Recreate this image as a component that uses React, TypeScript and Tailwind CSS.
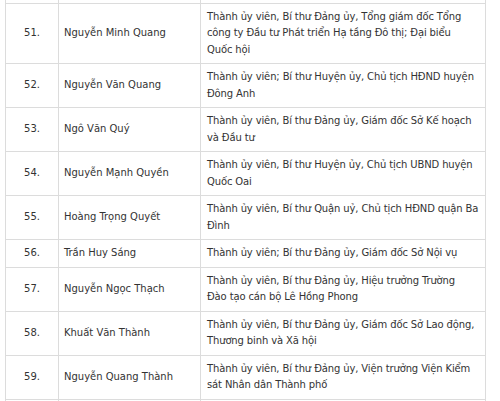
import React from "react";

const rows: [string, string, string[]][] = [
  ["51.", "Nguyễn Minh Quang", ["Thành ủy viên, Bí thư Đảng ủy, Tổng giám đốc Tổng", "công ty Đầu tư Phát triển Hạ tầng Đô thị; Đại biểu", "Quốc hội"]],
  ["52.", "Nguyễn Văn Quang", ["Thành ủy viên; Bí thư Huyện ủy, Chủ tịch HĐND huyện", "Đông Anh"]],
  ["53.", "Ngô Văn Quý", ["Thành ủy viên, Bí thư Đảng ủy, Giám đốc Sở Kế hoạch", "và Đầu tư"]],
  ["54.", "Nguyễn Mạnh Quyền", ["Thành ủy viên, Bí thư Huyện ủy, Chủ tịch UBND huyện", "Quốc Oai"]],
  ["55.", "Hoàng Trọng Quyết", ["Thành ủy viên, Bí thư Quận uỷ, Chủ tịch HĐND quận Ba", "Đình"]],
  ["56.", "Trần Huy Sáng", ["Thành ủy viên; Bí thư Đảng ủy, Giám đốc Sở Nội vụ"]],
  ["57.", "Nguyễn Ngọc Thạch", ["Thành ủy viên, Bí thư Đảng ủy, Hiệu trưởng Trường", "Đào tạo cán bộ Lê Hồng Phong"]],
  ["58.", "Khuất Văn Thành", ["Thành ủy viên, Bí thư Đảng ủy, Giám đốc Sở Lao động,", "Thương binh và Xã hội"]],
  ["59.", "Nguyễn Quang Thành", ["Thành ủy viên, Bí thư Đảng ủy, Viện trưởng Viện Kiểm", "sát Nhân dân Thành phố"]],
  ["60.", "", [""]],
];

export default function App() {
  return (
    <div className="w-[500px] h-[401px] overflow-hidden bg-white pl-[5px]" style={{ fontFamily: '"DejaVu Sans Condensed", "DejaVu Sans", Verdana, sans-serif', fontStretch: "condensed" }}>
      <table className="border-collapse table-fixed w-[480px] text-[11.1px] leading-[16.5px] text-[#333]">
        <colgroup>
          <col className="w-[53px]" />
          <col className="w-[142px]" />
          <col className="w-[285px]" />
        </colgroup>
        <tbody>
          <tr className="h-[3px]">
            <td className="border-x border-[#dcdcdc] p-0"></td>
            <td className="border-x border-[#dcdcdc] p-0"></td>
            <td className="border-x border-[#dcdcdc] p-0"></td>
          </tr>
          {rows.map(([n, name, lines]) => (
            <tr key={n}>
              <td className="border border-[#dcdcdc] text-center align-middle py-[5px]">{n}</td>
              <td className="border border-[#dcdcdc] align-middle px-[5px] py-[5px]">{name}</td>
              <td className="border border-[#dcdcdc] align-middle pl-[6px] pr-0 py-[5px] tracking-[-0.12px]">
                {lines.map((l, i) => (
                  <div key={i} className="whitespace-nowrap">{l}</div>
                ))}
              </td>
            </tr>
          ))}
        </tbody>
      </table>
    </div>
  );
}
